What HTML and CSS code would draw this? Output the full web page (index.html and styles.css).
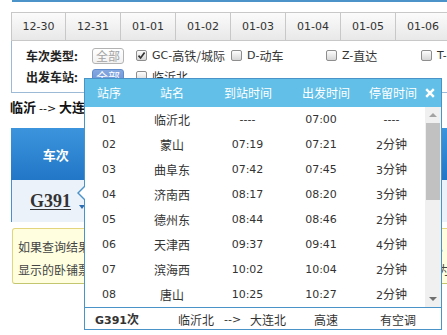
FILE: index.html
```html
<!DOCTYPE html>
<html>
<head>
<meta charset="utf-8">
<title>车次查询</title>
<link rel="stylesheet" href="styles.css">
</head>
<body>
<div class="page">
  <div class="topline"></div>
  <div class="tabs">
    <div class="tab first">12-30</div>
    <div class="tab">12-31</div>
    <div class="tab">01-01</div>
    <div class="tab">01-02</div>
    <div class="tab">01-03</div>
    <div class="tab">01-04</div>
    <div class="tab">01-05</div>
    <div class="tab">01-06</div>
    <div class="tab">01-07</div>
  </div>
  <div class="filter">
    <div class="frow">
      <span class="flabel zh">车次类型:</span>
      <span class="allbtn zh">全部</span>
      <span class="opt"><i class="cb"><svg width="9" height="9" viewBox="0 0 9 9"><path d="M1.5 4.6 L3.6 7 L7.6 1.6" fill="none" stroke="#333" stroke-width="1.7"/></svg></i>GC-<span class="zh">高铁/城际</span></span>
      <span class="opt"><i class="cb"></i>D-<span class="zh">动车</span></span>
      <span class="opt"><i class="cb"></i>Z-<span class="zh">直达</span></span>
      <span class="opt"><i class="cb"></i>T-<span class="zh">特快</span></span>
    </div>
    <div class="frow">
      <span class="flabel zh">出发车站:</span>
      <span class="allbtn on zh">全部</span>
      <span class="opt"><i class="cb"></i><span class="zh">临沂北</span></span>
    </div>
  </div>
  <div class="route zh">临沂 <span class="arrow">--&gt;</span> 大连北（12月30日）共计1个车次，可使用中转查询</div>
  <div class="result">
    <div class="rhead">
      <div class="hcell first zh">车次</div>
      <div class="hcell mid zh">出发站 / 到达站　出发时间 / 到达时间　历时</div>
      <div class="hcell last zh">商务</div>
    </div>
    <div class="rrow">
      <a class="trainno">G391</a>
      <span class="caret"></span>
    </div>
  </div>
  <div class="notice zh">
    <div>如果查询结果中没有满足需求的车次，您还可以使用中转换乘功能查询余票记录。</div>
    <div>显示的卧铺票价均为卧铺下铺票价，供您参考，具体票价以实际购买的卧铺票价为准。</div>
  </div>
</div>

<div class="popup">
  <span class="ptr-out"></span><span class="ptr-in"></span>
  <div class="phead zh">
    <div class="hc w1">站序</div>
    <div class="hc w2">站名</div>
    <div class="hc w3">到站时间</div>
    <div class="hc w4">出发时间</div>
    <div class="hc w5">停留时间</div>
    <div class="hc close"><svg width="10" height="10" viewBox="0 0 10 10"><path d="M1.2 1.2 L8.8 8.8 M8.8 1.2 L1.2 8.8" stroke="#fff" stroke-width="2.4"/></svg></div>
  </div>
  <div class="pbody">
    <div class="rows">
      <div class="prow"><span class="c1">01</span><span class="c2 zh">临沂北</span><span class="c3">----</span><span class="c4">07:00</span><span class="c5">----</span></div>
      <div class="prow"><span class="c1">02</span><span class="c2 zh">蒙山</span><span class="c3">07:19</span><span class="c4">07:21</span><span class="c5">2<span class="zh">分钟</span></span></div>
      <div class="prow"><span class="c1">03</span><span class="c2 zh">曲阜东</span><span class="c3">07:42</span><span class="c4">07:45</span><span class="c5">3<span class="zh">分钟</span></span></div>
      <div class="prow"><span class="c1">04</span><span class="c2 zh">济南西</span><span class="c3">08:17</span><span class="c4">08:20</span><span class="c5">3<span class="zh">分钟</span></span></div>
      <div class="prow"><span class="c1">05</span><span class="c2 zh">德州东</span><span class="c3">08:44</span><span class="c4">08:46</span><span class="c5">2<span class="zh">分钟</span></span></div>
      <div class="prow"><span class="c1">06</span><span class="c2 zh">天津西</span><span class="c3">09:37</span><span class="c4">09:41</span><span class="c5">4<span class="zh">分钟</span></span></div>
      <div class="prow"><span class="c1">07</span><span class="c2 zh">滨海西</span><span class="c3">10:02</span><span class="c4">10:04</span><span class="c5">2<span class="zh">分钟</span></span></div>
      <div class="prow"><span class="c1">08</span><span class="c2 zh">唐山</span><span class="c3">10:25</span><span class="c4">10:27</span><span class="c5">2<span class="zh">分钟</span></span></div>
    </div>
    <div class="sbar">
      <div class="sbtn"><i class="up"></i></div>
      <div class="thumb"></div>
      <div class="sfill"></div>
      <div class="sbtn"><i class="down"></i></div>
    </div>
  </div>
  <div class="pfoot">
    <span class="f1"><b>G391<span class="zh">次</span></b></span>
    <span class="f2 zh">临沂北</span>
    <span class="f3">--&gt;</span>
    <span class="f4 zh">大连北</span>
    <span class="f5 zh">高速</span>
    <span class="f6 zh">有空调</span>
  </div>
</div>
</body>
</html>
```

FILE: styles.css
```css
html, body {
  margin: 0;
  padding: 0;
  overflow: hidden;
  background: #fff;
}
body {
  width: 447px;
  height: 335px;
  position: relative;
  font-family: "DejaVu Sans", "Noto Sans CJK SC", sans-serif;
  font-size: 11px;
  color: #333;
}
.zh {
  font-family: "Noto Sans CJK SC", sans-serif;
  font-size: 12px;
}
.page {
  width: 480px;
  padding-left: 11px;
}
.topline {
  height: 2px;
  margin-left: 1px;
  background: #4b93c9;
}

/* date tabs */
.tabs {
  display: flex;
  margin-top: 10px;
  height: 27px;
  border-top: 1px solid #c8c8c8;
  border-bottom: 1px solid #c8c8c8;
}
.tab {
  flex: none;
  width: 54px;
  border-left: 1px solid #c8c8c8;
  display: flex;
  align-items: center;
  justify-content: center;
  background: linear-gradient(#fbfbfb, #e8e8e8);
  color: #333;
}
.tab.first { width: 53px; }

/* filter panel */
.filter {
  border: 1px solid #9cb9d5;
  border-top: none;
  padding: 4px 0 5px 14px;
}
.frow {
  display: flex;
  align-items: center;
  height: 21px;
  white-space: nowrap;
}
.flabel {
  flex: none;
  width: 66px;
  font-weight: bold;
  color: #222;
  line-height: 16px;
}
.allbtn {
  flex: none;
  box-sizing: border-box;
  width: 32px;
  height: 16px;
  line-height: 14px;
  margin-right: 12px;
  border: 1px solid #b3b3b3;
  border-radius: 3px;
  text-align: center;
  color: #a3a3a3;
  background: linear-gradient(#fff, #f1f1f1);
}
.allbtn.on {
  color: #fff;
  border-color: #5f8ccf;
  background: linear-gradient(#86a8e0, #6690d4);
}
.opt {
  flex: none;
  width: 95px;
  display: flex;
  align-items: center;
  line-height: 16px;
}
.cb {
  flex: none;
  box-sizing: border-box;
  width: 11px;
  height: 11px;
  margin-right: 5px;
  border: 1px solid #8e8e8e;
  border-radius: 2px;
  background: linear-gradient(#fdfdfd, #d6d6d6);
  display: flex;
  align-items: center;
  justify-content: center;
}
.cb svg { display: block; }

/* route line */
.route {
  margin: 4px 0 0 -1px;
  height: 20px;
  line-height: 20px;
  font-size: 13px;
  font-weight: bold;
  color: #111;
  white-space: nowrap;
}
.route .arrow {
  font-family: "DejaVu Sans", sans-serif;
  font-size: 11px;
  font-weight: normal;
}

/* result table */
.result {
  margin-top: 11px;
}
.rhead {
  display: flex;
  height: 52px;
  background: linear-gradient(#3c94dd, #2277c6);
  color: #fff;
  font-weight: bold;
  white-space: nowrap;
}
.hcell {
  display: flex;
  align-items: center;
  justify-content: center;
  font-size: 13px;
}
.hcell.first { width: 92px; }
.hcell.mid { width: 340px; }
.hcell.last {
  width: 60px;
  border-left: 1px solid #79b1e4;
}
.rrow {
  position: relative;
  height: 42px;
  display: flex;
  align-items: center;
  background: #ecf2fa;
  border-left: 1px solid #4a8fd0;
}
.trainno {
  margin-left: 18px;
  font-family: "Liberation Serif", serif;
  font-size: 18px;
  font-weight: bold;
  color: #333;
  text-decoration: underline;
  text-underline-offset: 2px;
}
.caret {
  position: absolute;
  left: 67px;
  top: 25px;
  width: 0;
  height: 0;
  border-left: 3px solid transparent;
  border-right: 3px solid transparent;
  border-top: 4px solid #2a6db3;
}

/* notice */
.notice {
  margin: 6px 0 0 1px;
  padding: 6px 5px 2px;
  border: 1px solid #e3d47e;
  border-bottom-color: #c3c66e;
  border-radius: 3px;
  background: #ffffe0;
  font-size: 12px;
  line-height: 23px;
  color: #444;
  white-space: nowrap;
}

/* popup */
.popup {
  position: absolute;
  left: 84px;
  top: 78px;
  width: 356px;
  border: 1px solid #4a93c8;
  background: #fff;
}
.ptr-out, .ptr-in {
  position: absolute;
  width: 0;
  height: 0;
}
.ptr-out {
  left: -8px;
  top: 107px;
  border-top: 7px solid transparent;
  border-bottom: 7px solid transparent;
  border-right: 7px solid #4a93c8;
}
.ptr-in {
  left: -6px;
  top: 108px;
  border-top: 6px solid transparent;
  border-bottom: 6px solid transparent;
  border-right: 6px solid #fff;
}
.phead {
  display: flex;
  align-items: center;
  height: 28px;
  background: #62c0e8;
  color: #fff;
  white-space: nowrap;
}
.hc {
  flex: none;
  display: flex;
  justify-content: center;
  line-height: 16px;
}
.hc.w1 { width: 48px; }
.hc.w2 { width: 78px; }
.hc.w3 { width: 74px; }
.hc.w4 { width: 82px; }
.hc.w5 { width: 52px; }
.hc.close { width: 22px; }
.hc svg { display: block; }

.pbody {
  display: flex;
}
.rows {
  width: 340px;
}
.prow {
  display: flex;
  align-items: center;
  height: 25px;
  white-space: nowrap;
  color: #333;
}
.prow > span {
  flex: none;
  display: flex;
  justify-content: center;
  align-items: baseline;
  line-height: 16px;
}
.c1 { width: 48px; }
.c2 { width: 78px; }
.c3 { width: 73px; }
.c4 { width: 74px; }
.c5 { width: 67px; }

.sbar {
  width: 16px;
  background: #f0f0f0;
  display: flex;
  flex-direction: column;
}
.sbtn {
  height: 16px;
  display: flex;
  align-items: center;
  justify-content: center;
}
.up, .down {
  width: 0;
  height: 0;
  border-left: 4px solid transparent;
  border-right: 4px solid transparent;
}
.up { border-bottom: 4px solid #a3a3a3; }
.down { border-top: 4px solid #6f6f6f; }
.thumb {
  height: 77px;
  margin: 0 1px;
  background: #c1c1c1;
}
.sfill { flex: 1; }

.pfoot {
  box-sizing: border-box;
  height: 22px;
  padding: 2px 0 0 10px;
  border-top: 1px solid #4a93c8;
  display: flex;
  align-items: center;
  white-space: nowrap;
  color: #333;
}
.pfoot > span {
  flex: none;
  line-height: 16px;
}
.f1 { width: 83px; }
.f2 { width: 46px; }
.f3 { width: 26px; }
.f4 { width: 64px; }
.f5 { width: 66px; }
```
